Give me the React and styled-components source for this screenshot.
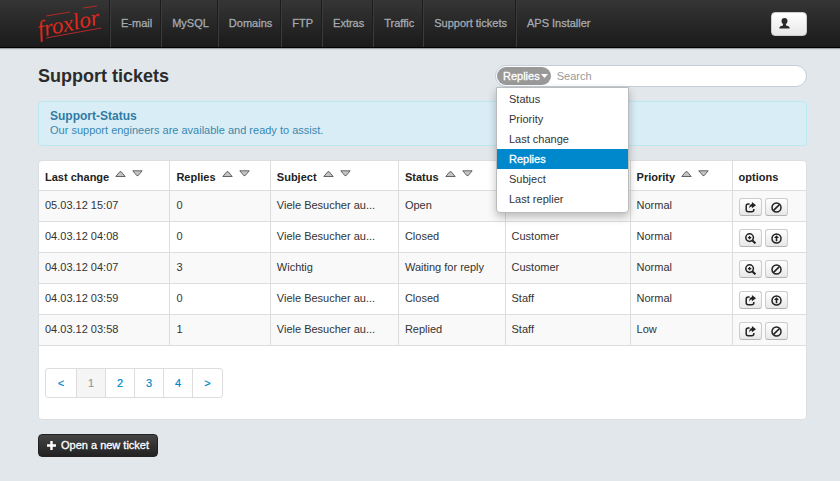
import React, { useState } from "react";
import styled, { createGlobalStyle, css } from "styled-components";

const GlobalStyle = createGlobalStyle`
  *, *::before, *::after { box-sizing: border-box; }
  body {
    margin: 0;
    background: #e1e7eb;
    color: #333;
    font-family: "Liberation Sans", Arial, sans-serif;
    font-size: 11px;
    line-height: 15px;
  }
  button, input { font: inherit; color: inherit; }
  button { cursor: pointer; padding: 0; }
`;

const Header = styled.header`
  display: flex;
  height: 48px;
  padding: 0 33px 0 32px;
  background: linear-gradient(#353535, #1a1a1a);
  border-bottom: 1px solid #000;
  box-shadow: 0 1px 1px rgba(0, 0, 0, 0.3);
`;

const Brand = styled.a`
  display: block;
  width: 78px;
  svg { display: block; }
`;

const Nav = styled.nav`
  display: flex;
  flex: 1;
`;

const NavLink = styled.a`
  display: flex;
  align-items: center;
  padding: 0 9px 0 10px;
  border-left: 1px solid #3a3a3a;
  box-shadow: -1px 0 0 #1c1c1c;
  color: #a5abb1;
  -webkit-text-stroke: 0.3px #a5abb1;
  text-decoration: none;
  text-shadow: 0 -1px 0 rgba(0, 0, 0, 0.25);
  white-space: nowrap;
`;

const UserButton = styled.button`
  align-self: center;
  display: flex;
  align-items: center;
  width: 36px;
  height: 24px;
  padding: 0 7px;
  border: 1px solid #ccc;
  border-radius: 4px;
  background: linear-gradient(#fff, #e8e8e8);
`;

const Page = styled.main`
  padding: 16px 33px 24px 38px;
`;

const TitleRow = styled.div`
  display: flex;
  align-items: center;
  justify-content: space-between;
  gap: 24px;
  margin-bottom: 13px;
`;

const Title = styled.h1`
  margin: 0;
  font-size: 18px;
  line-height: 24px;
  color: #2b2b2b;
`;

const SearchBox = styled.form`
  position: relative;
  display: flex;
  align-items: center;
  flex: 0 1 312px;
  height: 22px;
  padding: 0 8px 0 1px;
  border: 1px solid #c3ced8;
  border-radius: 11px;
  background: #fff;
`;

const FilterButton = styled.button`
  display: flex;
  align-items: center;
  gap: 1px;
  height: 18px;
  padding: 0 3px 0 6px;
  border: 0;
  border-radius: 9px;
  background: #999;
  color: #fff;
  -webkit-text-stroke: 0.3px #fff;
`;

const SearchInput = styled.input`
  flex: 1;
  min-width: 0;
  padding: 0 6px;
  border: 0;
  outline: 0;
  background: transparent;
  &::placeholder { color: #999; opacity: 1; }
`;

const Menu = styled.ul`
  position: absolute;
  z-index: 2;
  top: 21px;
  left: 0;
  width: 133px;
  margin: 0;
  padding: 1px 0 3px;
  list-style: none;
  background: #fff;
  border: 1px solid #bbb;
  border-radius: 0 0 4px 4px;
  box-shadow: 0 4px 8px rgba(0, 0, 0, 0.25);
`;

const MenuItem = styled.button`
  display: block;
  width: 100%;
  height: 20px;
  padding: 0 12px;
  border: 0;
  background: transparent;
  text-align: left;
  ${(p) => p.$active && css`
    background: #0088cc;
    color: #fff;
    -webkit-text-stroke: 0.3px #fff;
  `}
`;

const Notice = styled.section`
  margin-bottom: 14px;
  padding: 7px 11px;
  border: 1px solid #bce8f1;
  border-radius: 4px;
  background: #d9edf7;
  color: #3a87ad;
`;

const NoticeTitle = styled.h2`
  margin: 0;
  font-size: 12px;
  line-height: 14px;
  color: #2f7ba3;
`;

const NoticeText = styled.p`
  margin: 0;
`;

const Panel = styled.section`
  margin-bottom: 14px;
  padding-bottom: 21px;
  border: 1px solid #dcdfe1;
  border-radius: 4px;
  background: #fff;
`;

const Table = styled.table`
  width: 100%;
  table-layout: fixed;
  border-collapse: separate;
  border-spacing: 0;
`;

const Column = styled.col`
  width: ${(p) => p.$width};
`;

const cell = css`
  border-bottom: 1px solid #ddd;
  text-align: left;
  vertical-align: top;
  white-space: nowrap;
  & + & { border-left: 1px solid #ddd; }
`;

const HeadCell = styled.th`
  ${cell}
  height: 30px;
  padding: 9px 6px 5px;
  color: #222;
`;

const Cell = styled.td`
  ${cell}
  height: 31px;
  padding: 7px 6px 5px;
`;

const BodyRow = styled.tr`
  &:nth-child(odd) { background: #f9f9f9; }
`;

const HeadLabel = styled.div`
  display: flex;
  align-items: flex-start;
  gap: 6px;
`;

const SortButton = styled.button`
  display: flex;
  border: 0;
  background: none;
  svg { display: block; }
`;

const Actions = styled.div`
  display: flex;
  gap: 3px;
`;

const ActionButton = styled.button`
  display: flex;
  align-items: center;
  justify-content: center;
  width: 23px;
  height: 18px;
  border: 1px solid #ccc;
  border-bottom-color: #b3b3b3;
  border-radius: 3px;
  background: linear-gradient(#fff, #e8e8e8);
  color: #222;
  svg { display: block; }
`;

const Pager = styled.nav`
  display: inline-flex;
  margin: 22px 6px 0;
  border: 1px solid #ddd;
  border-radius: 3px;
  vertical-align: top;
`;

const PageLink = styled.a`
  width: ${(p) => (p.$edge ? "30px" : "29px")};
  line-height: 28px;
  text-align: center;
  text-decoration: none;
  color: ${(p) => (p.$current ? "#999" : "#0088cc")};
  background: ${(p) => (p.$current ? "#f5f5f5" : "transparent")};
  -webkit-text-stroke: 0.2px currentColor;
  & + & { border-left: 1px solid #ddd; }
`;

const NewTicketButton = styled.button`
  display: inline-flex;
  align-items: center;
  gap: 5px;
  height: 23px;
  padding: 0 8px;
  border: 1px solid #222;
  border-radius: 4px;
  background: linear-gradient(#444, #222);
  color: #fff;
  -webkit-text-stroke: 0.3px #fff;
`;

const Logo = () => (
  <svg width="74" height="47" viewBox="0 0 74 47" role="img" aria-label="froxlor">
    <g transform="rotate(-12 36 24)">
      <text x="5" y="31" fill="#e0281c" fontFamily="'Z003', 'URW Chancery L', 'Liberation Serif', serif" fontStyle="italic" fontSize="23">
        froxlor
      </text>
    </g>
    <g fill="none" stroke="#b02a26" strokeWidth="1">
      <path d="M14 16 38 12M51 8 65 6M14 38 69 28" />
    </g>
  </svg>
);

const Caret = () => (
  <svg width="7" height="4" viewBox="0 0 7 4" aria-hidden="true">
    <path d="M0 0h7L3.500 4z" fill="#fff" />
  </svg>
);

const SortArrow = ({ down }) => (
  <svg width="11" height="8" viewBox="0 0 11 8" aria-hidden="true">
    <path
      d={down ? "M.8.8H10.2L6.2 5.6H4.8Z" : "M.8 6.5H10.2L6.2 1.7H4.8Z"}
      fill="#c4c4c4"
      stroke="#444"
      strokeWidth=".8"
      strokeLinejoin="round"
    />
  </svg>
);

const UserIcon = () => (
  <svg width="11" height="11" viewBox="0 0 11 11" aria-hidden="true">
    <path
      d="M5.500 0C3.500 0 2.500 1.200 2.500 2.900C2.500 4.300 3.200 5.300 4 6V7.200C3.400 8 .9 7.900.4 9.400V10.600H10.600V9.400C10.100 7.900 7.600 8 7 7.200V6C7.800 5.300 8.500 4.300 8.500 2.900C8.500 1.200 7.500 0 5.500 0z"
      fill="#2b2b2b"
    />
  </svg>
);

const PlusIcon = () => (
  <svg width="9" height="9" viewBox="0 0 9 9" aria-hidden="true">
    <path d="M3.300 0h2.400v3.300H9v2.400H5.700V9H3.300V5.700H0V3.300h3.300z" fill="#fff" />
  </svg>
);

const actionShapes = {
  Answer: (
    <>
      <path d="M4.600 2H3.200Q1.200 2 1.200 4v3.800q0 2 2 2h3.600q2 0 2-2V7" />
      <path d="M6.900 0 11 3.200 6.900 6.300V4.500Q5 4.400 4.300 6.600 4 2.400 6.900 1.900Z" fill="currentColor" stroke="none" />
    </>
  ),
  Close: (
    <>
      <circle cx="5.500" cy="5.500" r="4.500" />
      <path d="M2.600 8.400 8.400 2.600" />
    </>
  ),
  View: (
    <>
      <circle cx="4.600" cy="4.600" r="3.800" />
      <path d="M7.200 7.200 10.400 10.400" strokeWidth="2" />
      <path d="M2.900 4.600h3.400M4.600 2.900v3.400" strokeWidth="1.300" />
    </>
  ),
  Reopen: (
    <>
      <circle cx="5.500" cy="5.500" r="4.500" />
      <path d="M5.500 2.200 8 5.100H6.300V8.300H4.700V5.100H3Z" fill="currentColor" stroke="none" />
    </>
  ),
};

const ActionIcon = ({ name }) => (
  <svg width="11" height="11" viewBox="0 0 11 11" fill="none" stroke="currentColor" strokeWidth="1.500" aria-hidden="true">
    {actionShapes[name]}
  </svg>
);

const navItems = ["E-mail", "MySQL", "Domains", "FTP", "Extras", "Traffic", "Support tickets", "APS Installer"];
const filters = ["Status", "Priority", "Last change", "Replies", "Subject", "Last replier"];
const columns = [
  ["Last change", "17%"],
  ["Replies", "13.1%"],
  ["Subject", "16.7%"],
  ["Status", "13.9%"],
  ["", "16.3%"],
  ["Priority", "13.3%"],
];
const tickets = [
  ["05.03.12 15:07", "0", "Viele Besucher au...", "Open", "", "Normal", ["Answer", "Close"]],
  ["04.03.12 04:08", "0", "Viele Besucher au...", "Closed", "Customer", "Normal", ["View", "Reopen"]],
  ["04.03.12 04:07", "3", "Wichtig", "Waiting for reply", "Customer", "Normal", ["View", "Close"]],
  ["04.03.12 03:59", "0", "Viele Besucher au...", "Closed", "Staff", "Normal", ["Answer", "Reopen"]],
  ["04.03.12 03:58", "1", "Viele Besucher au...", "Replied", "Staff", "Low", ["Answer", "Close"]],
];

function Search() {
  const [filter, setFilter] = useState("Replies");
  const [open, setOpen] = useState(true);
  return (
    <SearchBox role="search" onSubmit={(e) => e.preventDefault()}>
      <FilterButton type="button" aria-haspopup="true" aria-expanded={open} onClick={() => setOpen(!open)}>
        {filter}
        <Caret />
      </FilterButton>
      <SearchInput type="text" placeholder="Search" aria-label="Search" />
      {open && (
        <Menu>
          {filters.map((name) => (
            <li key={name}>
              <MenuItem type="button" $active={name === filter} onClick={() => setFilter(name)}>
                {name}
              </MenuItem>
            </li>
          ))}
        </Menu>
      )}
    </SearchBox>
  );
}

function SortableHead({ name }) {
  return (
    <HeadLabel>
      {name}
      <SortButton type="button" aria-label={`Sort by ${name}, ascending`}>
        <SortArrow />
      </SortButton>
      <SortButton type="button" aria-label={`Sort by ${name}, descending`}>
        <SortArrow down />
      </SortButton>
    </HeadLabel>
  );
}

function TicketTable() {
  return (
    <Table>
      <colgroup>
        {columns.map(([name, width]) => (
          <Column key={name} $width={width} />
        ))}
        <Column $width="auto" />
      </colgroup>
      <thead>
        <tr>
          {columns.map(([name]) => (
            <HeadCell key={name} scope="col">
              {name && <SortableHead name={name} />}
            </HeadCell>
          ))}
          <HeadCell scope="col">options</HeadCell>
        </tr>
      </thead>
      <tbody>
        {tickets.map((ticket) => {
          const values = ticket.slice(0, -1);
          const actions = ticket[ticket.length - 1];
          return (
            <BodyRow key={ticket[0]}>
              {values.map((value, i) => (
                <Cell key={i}>{value}</Cell>
              ))}
              <Cell>
                <Actions>
                  {actions.map((name) => (
                    <ActionButton key={name} type="button" aria-label={name}>
                      <ActionIcon name={name} />
                    </ActionButton>
                  ))}
                </Actions>
              </Cell>
            </BodyRow>
          );
        })}
      </tbody>
    </Table>
  );
}

export default function App() {
  return (
    <>
      <GlobalStyle />
      <Header>
        <Brand href="#">
          <Logo />
        </Brand>
        <Nav>
          {navItems.map((name) => (
            <NavLink key={name} href="#">{name}</NavLink>
          ))}
        </Nav>
        <UserButton type="button" aria-label="Account">
          <UserIcon />
        </UserButton>
      </Header>
      <Page>
        <TitleRow>
          <Title>Support tickets</Title>
          <Search />
        </TitleRow>
        <Notice>
          <NoticeTitle>Support-Status</NoticeTitle>
          <NoticeText>Our support engineers are available and ready to assist.</NoticeText>
        </Notice>
        <Panel>
          <TicketTable />
          <Pager aria-label="Pages">
            {["<", "1", "2", "3", "4", ">"].map((label) => (
              <PageLink key={label} href="#" $current={label === "1"} $edge={label === "<" || label === ">"}>
                {label}
              </PageLink>
            ))}
          </Pager>
        </Panel>
        <NewTicketButton type="button">
          <PlusIcon />
          Open a new ticket
        </NewTicketButton>
      </Page>
    </>
  );
}
